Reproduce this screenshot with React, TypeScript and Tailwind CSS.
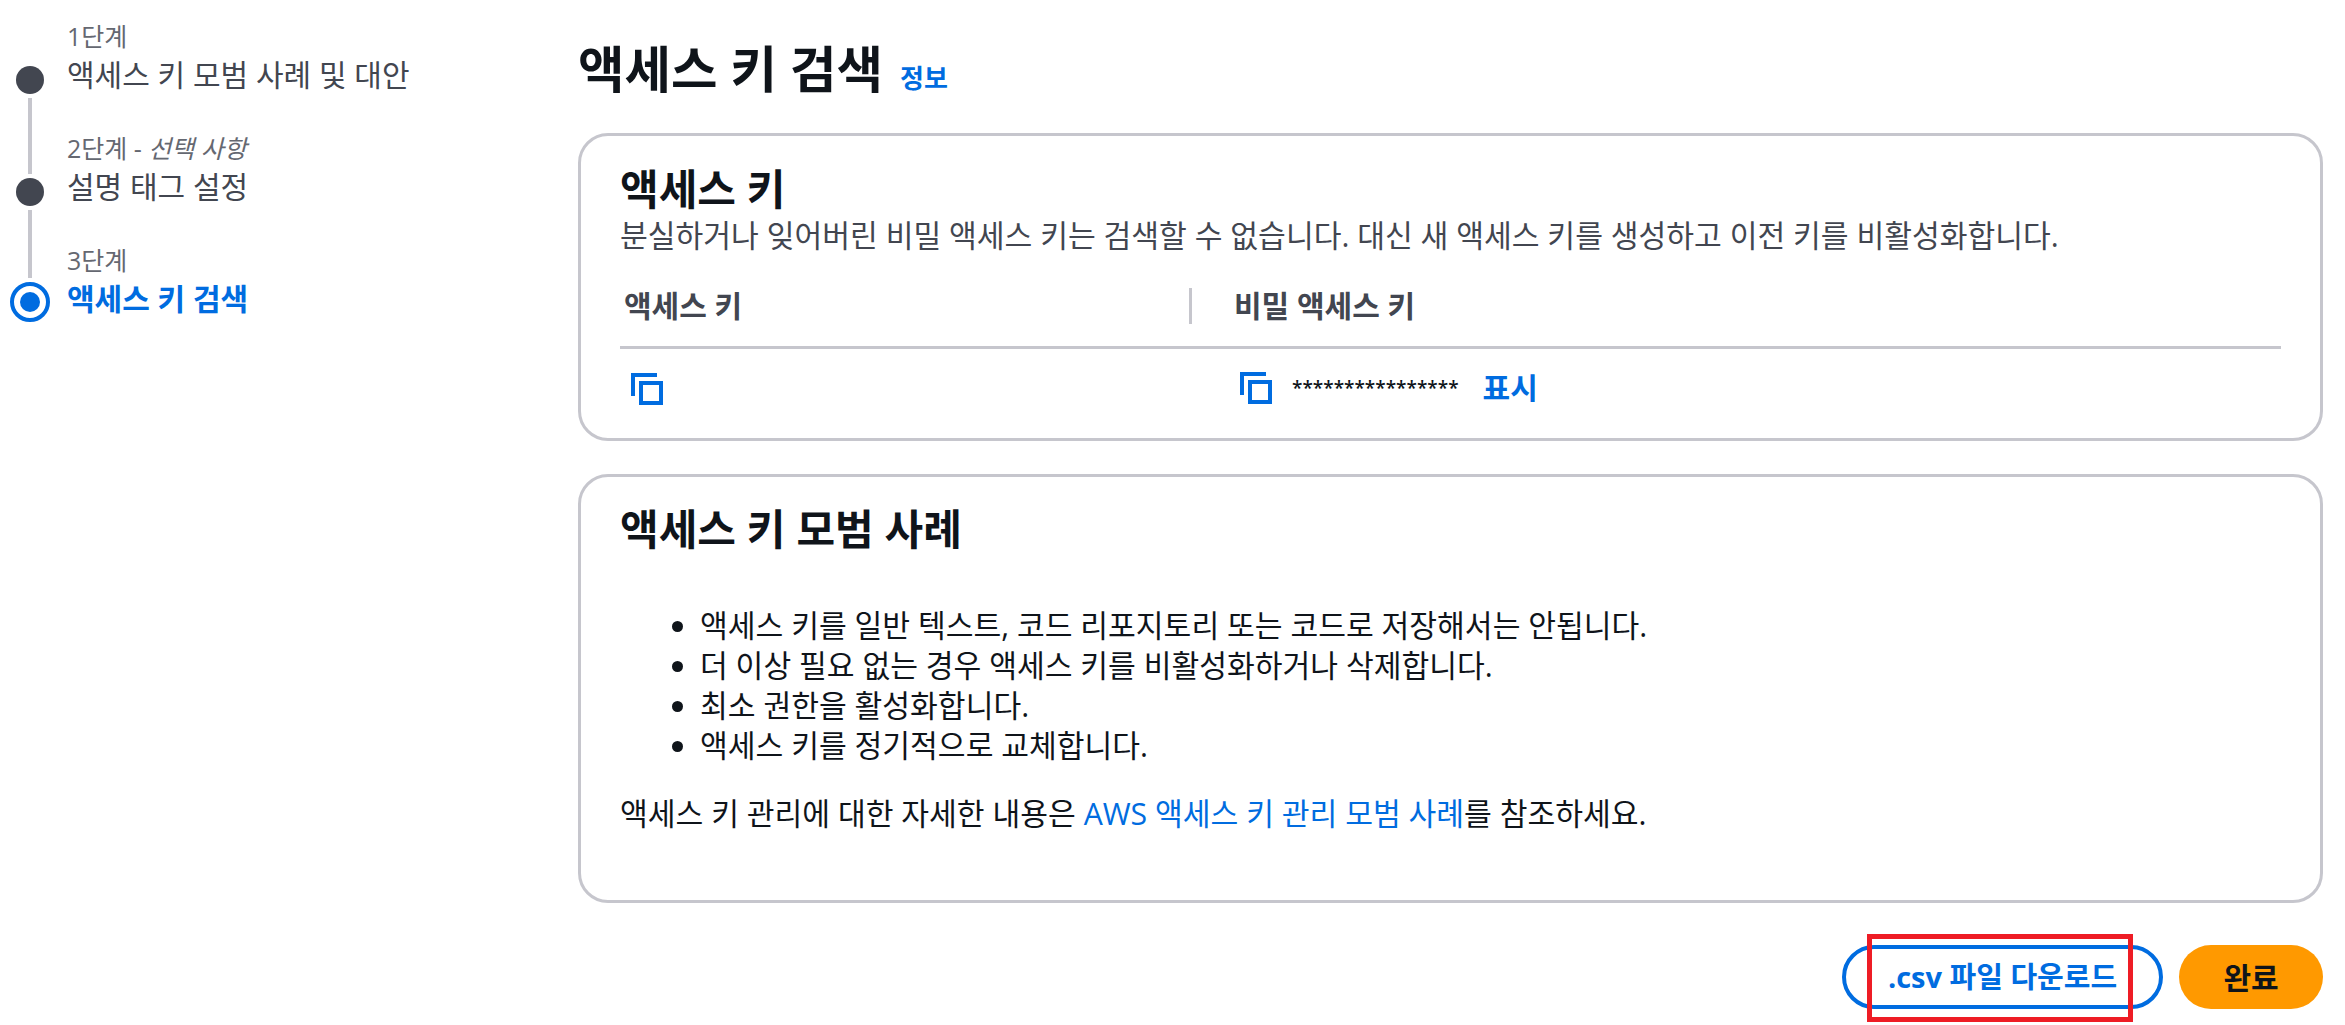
const font = "font-['Open_Sans','Noto_Sans_CJK_KR',sans-serif]";

const CopyIcon = () => (
  <svg viewBox="0 0 32 32" className="h-8 w-8 shrink-0 fill-none stroke-[#006ce0] stroke-[4]">
    <path d="M2 23V2h24" />
    <rect x="10" y="10" width="20" height="20" />
  </svg>
);

const Steps = () => (
  <aside className="flex w-[578px] shrink-0 pl-[10px] pt-[21px]">
    <div className="flex w-10 flex-col items-center pt-[45px]">
      <span className="h-7 w-7 rounded-full bg-[#424650]" />
      <span className="my-[4px] h-[76px] w-1 bg-[#c6c6cd]" />
      <span className="h-7 w-7 rounded-full bg-[#424650]" />
      <span className="my-[4px] h-[68px] w-1 bg-[#c6c6cd]" />
      <span className="flex h-10 w-10 items-center justify-center rounded-full border-4 border-[#006ce0]">
        <span className="h-5 w-5 rounded-full bg-[#006ce0]" />
      </span>
    </div>
    <div className="ml-[17px] flex flex-col text-[30px] leading-[30px] text-[#424650]">
      <div className="h-[112px]">
        <p className="text-[25px] text-[#656871]">1단계</p>
        <p className="mt-[9px]">액세스 키 모범 사례 및 대안</p>
      </div>
      <div className="h-[112px]">
        <p className="text-[25px] text-[#656871]">
          2단계 - <i>선택 사항</i>
        </p>
        <p className="mt-[9px]">설명 태그 설정</p>
      </div>
      <div>
        <p className="text-[25px] text-[#656871]">3단계</p>
        <p className="mt-[9px] font-bold text-[#006ce0]">액세스 키 검색</p>
      </div>
    </div>
  </aside>
);

export default function App() {
  return (
    <div className={`${font} relative flex h-[1025px] w-[2345px] overflow-hidden bg-white text-[#0f141a]`}>
      <Steps />
      <main className="flex w-[1745px] flex-col">
        <div className="flex h-[133px] items-start gap-[17px] pt-[42px]">
          <h1 className="text-[50.5px] font-bold leading-[54px]">액세스 키 검색</h1>
          <a className="mt-[21px] text-[26px] font-bold leading-[30px] text-[#006ce0]">정보</a>
        </div>

        <section className="h-[308px] rounded-[30px] border-[3px] border-[#c6c6cd] px-[39px] pt-[30px]">
          <h2 className="text-[42px] font-bold leading-[46px]">액세스 키</h2>
          <p className="mt-[8px] text-[30.2px] leading-[32px] text-[#424650]">
            분실하거나 잊어버린 비밀 액세스 키는 검색할 수 없습니다. 대신 새 액세스 키를 생성하고 이전 키를 비활성화합니다.
          </p>
          <div className="mt-[36px] grid grid-cols-[569px_1fr] border-b-[3px] border-[#c6c6cd] pb-[22px] text-[30px] font-bold leading-9 text-[#424650]">
            <span className="pl-[4px]">액세스 키</span>
            <span className="border-l-[3px] border-[#c6c6cd] pl-[42px]">비밀 액세스 키</span>
          </div>
          <div className="grid grid-cols-[569px_1fr] items-center pt-[24px]">
            <div className="pl-[11px]">
              <CopyIcon />
            </div>
            <div className="-mt-[2px] flex items-center pl-[51px]">
              <CopyIcon />
              <span className="ml-[20px] text-[19px] font-semibold leading-[30px]">****************</span>
              <a className="ml-[24px] text-[30px] font-bold leading-[30px] text-[#006ce0]">표시</a>
            </div>
          </div>
        </section>

        <section className="mt-[33px] h-[429px] rounded-[30px] border-[3px] border-[#c6c6cd] px-[39px] pt-[29px] text-[30.2px] leading-[40px]">
          <h2 className="text-[42px] font-bold leading-[46px]">액세스 키 모범 사례</h2>
          <ul className="mt-[54px] list-disc pl-[80px]">
            <li>액세스 키를 일반 텍스트, 코드 리포지토리 또는 코드로 저장해서는 안됩니다.</li>
            <li>더 이상 필요 없는 경우 액세스 키를 비활성화하거나 삭제합니다.</li>
            <li>최소 권한을 활성화합니다.</li>
            <li>액세스 키를 정기적으로 교체합니다.</li>
          </ul>
          <p className="mt-[28px]">
            액세스 키 관리에 대한 자세한 내용은 <a className="text-[#006ce0]">AWS 액세스 키 관리 모범 사례</a>를 참조하세요.
          </p>
        </section>

        <div className="mt-[42px] flex justify-end gap-4">
          <button className="h-16 w-[321px] rounded-full border-4 border-[#006ce0] text-[29px] font-bold text-[#006ce0]">
            .csv 파일 다운로드
          </button>
          <button className="h-16 w-[144px] rounded-full bg-[#ff9900] text-[30px] font-bold">완료</button>
        </div>
      </main>
      <div className="absolute left-[1867px] top-[934px] h-[88px] w-[266px] border-[5px] border-[#ee1c25]" />
    </div>
  );
}
